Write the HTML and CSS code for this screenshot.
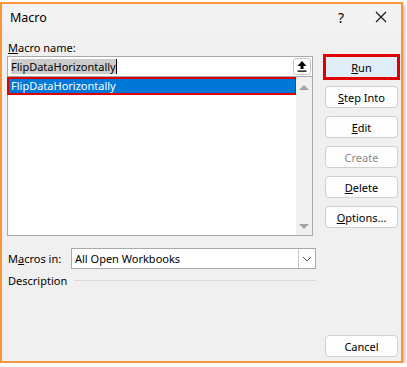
FILE: index.html
```html
<!DOCTYPE html>
<html lang="en">
<head>
    <meta charset="UTF-8">
    <title>Macro</title>
    <link rel="stylesheet" href="styles.css">
</head>
<body>
    <div class="dialog">
        <div class="titlebar">
            <span class="title">Macro</span>
            <span class="help">?</span>
            <span class="close">
                <svg width="12" height="12" viewBox="0 0 12 12"><path d="M1 1 L11 11 M11 1 L1 11" stroke="#1a1a1a" stroke-width="1.2"/></svg>
            </span>
        </div>
        <div class="content">
            <div class="main">
                <div class="left">
                    <label class="lbl"><u>M</u>acro name:</label>
                    <div class="namebox">
                        <span class="nametext"><span class="hilite">FlipDataHorizontally</span><span class="caret"></span></span>
                        <span class="upbtn">
                            <svg width="10" height="11" viewBox="0 0 10 11"><path d="M5 0 L9.5 5 H6.5 V8 H3.5 V5 H0.5 Z" fill="#000"/><rect x="0.5" y="9.5" width="9" height="1.3" fill="#000"/></svg>
                        </span>
                    </div>
                    <div class="listbox">
                        <div class="items">
                            <div class="item selected">FlipDataHorizontally</div>
                        </div>
                        <div class="scroll">
                            <span class="arrow up"></span>
                            <span class="arrow down"></span>
                        </div>
                    </div>
                </div>
                <div class="buttons">
                    <button class="btn run"><u>R</u>un</button>
                    <button class="btn"><u>S</u>tep Into</button>
                    <button class="btn"><u>E</u>dit</button>
                    <button class="btn disabled">Create</button>
                    <button class="btn"><u>D</u>elete</button>
                    <button class="btn"><u>O</u>ptions...</button>
                </div>
            </div>
            <div class="row-in">
                <label class="lbl">M<u>a</u>cros in:</label>
                <div class="select">
                    <span>All Open Workbooks</span>
                    <span class="drop">
                        <svg width="10" height="6" viewBox="0 0 10 6"><path d="M1 1 L5 5 L9 1" fill="none" stroke="#555" stroke-width="1"/></svg>
                    </span>
                </div>
            </div>
            <div class="desc">
                <span>Description</span>
                <span class="rule"></span>
            </div>
            <div class="bottom">
                <button class="btn cancel">Cancel</button>
            </div>
        </div>
    </div>
</body>
</html>
```

FILE: styles.css
```css
* {
    box-sizing: border-box;
}
body {
    margin: 0;
    padding-top: 2px;
    background-color: #ffffff;
    font-family: "Segoe UI", "Noto Sans", "Open Sans", sans-serif;
    font-size: 11px;
    color: #000;
}
.dialog {
    width: 403px;
    height: 361px;
    border: 2px solid #f7963b;
    background-color: #f0f0f0;
    box-shadow: 2px 3px 3px rgba(0, 0, 0, 0.25);
    display: flex;
    flex-direction: column;
}
.titlebar {
    height: 29px;
    background-color: #f3f3f3;
    display: flex;
    align-items: center;
    padding: 0 0 3px 8px;
}
.title {
    font-size: 12.5px;
    flex: 1;
}
.help {
    font-size: 14px;
    width: 20px;
    text-align: center;
    margin-right: 24px;
}
.close {
    width: 14px;
    display: flex;
    margin-right: 12px;
}
.content {
    padding: 8px 3px 0 5px;
    display: flex;
    flex-direction: column;
}
.main {
    display: flex;
}
.left {
    width: 306px;
    flex-shrink: 0;
}
.lbl {
    display: block;
    height: 15px;
    line-height: 13px;
    padding-left: 1px;
}
.namebox {
    height: 20px;
    border: 1px solid #a9a9a9;
    border-bottom: none;
    background: #fff;
    display: flex;
    align-items: center;
    padding-left: 3px;
}
.nametext {
    flex: 1;
    display: flex;
    align-items: center;
}
.hilite {
    background: #cccccc;
    line-height: 15px;
}
.caret {
    width: 1px;
    height: 15px;
    background: #000;
}
.upbtn {
    width: 18px;
    height: 17px;
    border: 1px solid #c8c8c8;
    border-radius: 3px;
    margin-right: 1px;
    display: flex;
    align-items: center;
    justify-content: center;
    background: #fff;
}
.listbox {
    height: 160px;
    border: 1px solid #a9a9a9;
    background: #fff;
    display: flex;
}
.items {
    flex: 1;
    padding-top: 2px;
}
.item {
    height: 14px;
    line-height: 14px;
    padding-left: 2px;
}
.selected {
    background-color: #0078d7;
    color: #fff;
    outline: 2px solid #e00000;
    margin: 0 1px 0 1px;
}
.scroll {
    width: 16px;
    background: #f0f0f0;
    display: flex;
    flex-direction: column;
    justify-content: space-between;
    align-items: center;
    padding: 8px 0 6px 0;
}
.arrow {
    width: 0;
    height: 0;
    border-left: 5px solid transparent;
    border-right: 5px solid transparent;
}
.up {
    border-bottom: 5px solid #a3a3a3;
}
.down {
    border-top: 5px solid #a3a3a3;
}
.buttons {
    margin-left: 12px;
    display: flex;
    flex-direction: column;
    gap: 8px;
    padding-top: 15px;
}
.btn {
    width: 73px;
    height: 22px;
    background: #fdfdfd;
    border: 1px solid #d0d0d0;
    border-radius: 4px;
    font-family: inherit;
    font-size: 11px;
    color: #000;
    padding: 0;
}
.run {
    background: #e0eef9;
    border: 3px solid #e00000;
    border-radius: 0;
    width: 77px;
    height: 26px;
    margin: -2px 0 -2px -2px;
}
.disabled {
    color: #8a8a8a;
}
.row-in {
    display: flex;
    align-items: center;
    margin-top: 12px;
}
.row-in .lbl {
    width: 64px;
    line-height: 15px;
}
.select {
    width: 245px;
    height: 21px;
    border: 1px solid #a9a9a9;
    background: #fff;
    display: flex;
    align-items: center;
    padding-left: 3px;
}
.select span:first-child {
    flex: 1;
}
.drop {
    width: 17px;
    height: 19px;
    border-left: 1px solid #c8c8c8;
    display: flex;
    align-items: center;
    justify-content: center;
}
.desc {
    display: flex;
    align-items: center;
    margin-top: 3px;
    height: 16px;
    padding-left: 1px;
}
.rule {
    width: 242px;
    height: 1px;
    background: #d8d8d8;
    margin-left: 7px;
}
.bottom {
    display: flex;
    justify-content: flex-end;
    margin-top: 47px;
}
u {
    text-decoration-thickness: 1px;
}
```
